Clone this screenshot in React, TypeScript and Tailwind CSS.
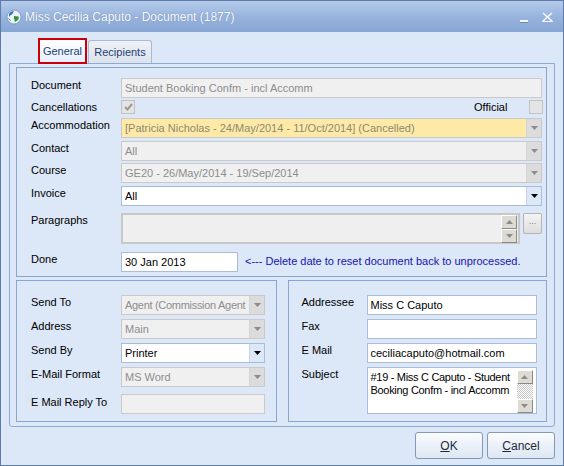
import React from "react";

const Arrow = ({ dark = false, up = false }: { dark?: boolean; up?: boolean }) => (
  <svg width="7" height="4" viewBox="0 0 7 4" aria-hidden>
    <path d={up ? "M0 4h7L3.5 0z" : "M0 0h7L3.5 4z"} fill={dark ? "#000" : "#8c8c8c"} />
  </svg>
);

type FieldProps = {
  value?: string;
  width: string;
  disabled?: boolean;
  combo?: boolean;
  yellow?: boolean;
  tight?: boolean;
};

const Field = ({ value = "", width, disabled = false, combo = false, yellow = false, tight = false }: FieldProps) => {
  const box = disabled
    ? yellow
      ? "border-[#c9c9c9] bg-[#ffe9a6] text-[#8d8a72]"
      : "border-[#cacaca] bg-[#f0f0f0] text-[#8d8d8d]"
    : "border-[#a9bcd8] bg-white text-black";
  return (
    <div className={`flex h-5 shrink-0 border ${box} ${width}`}>
      <div
        className={
          tight
            ? "min-w-0 flex-1 overflow-hidden whitespace-nowrap pl-[3px] leading-[18px] tracking-[-0.3px]"
            : "min-w-0 flex-1 overflow-hidden whitespace-nowrap px-[3px] leading-[18px]"
        }
      >
        {value}
      </div>
      {combo && (
        <div
          className={
            disabled
              ? "flex w-[15px] items-center justify-center border-l border-[#d4d4d4] bg-[#dcdcdc]"
              : "flex w-[15px] items-center justify-center border-l border-[#c5d5ea] bg-[#dde8f6]"
          }
        >
          <Arrow dark={!disabled} />
        </div>
      )}
    </div>
  );
};

const Label = ({ children, w }: { children: React.ReactNode; w: string }) => (
  <div className={`${w} shrink-0 pt-[1px] leading-[13px]`}>{children}</div>
);

const SpinButton = ({ up }: { up?: boolean }) => (
  <div className="flex h-[14px] w-[16px] items-center justify-center border border-t-[#ffffff] border-l-[#ffffff] border-r-[#8a8a8a] border-b-[#8a8a8a] bg-[#dedbd2]">
    <Arrow up={up} />
  </div>
);

const CheckBox = ({ checked }: { checked?: boolean }) => (
  <div className="flex h-[14px] w-[14px] items-center justify-center border border-[#c2c2c2] bg-[#e4e4e4]">
    {checked && (
      <svg width="9" height="8" viewBox="0 0 9 8" aria-hidden>
        <path d="M1 4l2.5 2.5L8 1" stroke="#9a9a9a" strokeWidth="2" fill="none" />
      </svg>
    )}
  </div>
);

const GlobeIcon = () => (
  <svg width="16" height="16" viewBox="0 0 16 16" aria-hidden>
    <circle cx="8" cy="8" r="7" fill="#e9f1fb" stroke="#6d8fb8" strokeWidth="0.8" />
    <path d="M3 5c1-2 3-3 5-3-1 1-1 3-3 4-1 0-1 1-2 2z" fill="#2f6fb4" />
    <path d="M8 7c2 0 3 1 4 0 1 1 1 3 0 4-1 1-2 1-3 2-1-1 0-3-1-3z" fill="#3b8f3a" />
    <path d="M2 9c1 0 2 1 3 3-1 0-2-1-3-3z" fill="#5aa04a" />
  </svg>
);

export default function App() {
  return (
    <div className="flex h-[466px] w-[564px] flex-col overflow-hidden border border-[#5f7ca8] bg-[#dce7f7] font-['Liberation_Sans',Arial,sans-serif] text-[11px] text-black">
      {/* title bar */}
      <div className="flex h-[31px] shrink-0 items-center bg-gradient-to-b from-[#b5cbea] via-[#98b4de] to-[#87a6d3] pl-[5px] pr-[10px]">
        <GlobeIcon />
        <div className="ml-[3px] text-[12px] text-white [text-shadow:0_0_1px_#5575a3]">
          Miss Cecilia Caputo - Document (1877)
        </div>
        <div className="ml-auto flex items-center gap-[14px] text-white">
          <div className="mt-[8px] h-[2px] w-[8px] bg-[#f4f8fd] shadow-[0_1px_0_#6b88b3]" />
          <svg width="11" height="10" viewBox="0 0 11 10" aria-hidden>
            <path d="M1 1l9 8M10 1L1 9" stroke="#f4f8fd" strokeWidth="1.6" />
            <path d="M0 9.5h11" stroke="#f4f8fd" strokeWidth="1" />
          </svg>
        </div>
      </div>

      <div className="flex flex-1 flex-col px-[8px]">
        {/* tabs */}
        <div className="flex h-[31px] shrink-0 items-end pl-[29px]">
          <div className="relative z-10 -mb-[1px] flex h-[26px] w-[49px] items-center justify-center border-2 border-[#c8000a] bg-gradient-to-b from-white to-[#e6eefa] text-[#1c3f78]">
            General
          </div>
          <div className="ml-[1px] flex h-[23px] w-[64px] items-center justify-center rounded-t-[3px] border border-b-0 border-[#a7b9d5] bg-gradient-to-b from-[#eef1f5] to-[#dde3ec] text-[#1c3f78]">
            Recipients
          </div>
        </div>

        {/* tab page */}
        <div className="flex h-[364px] shrink-0 flex-col rounded-b-[3px] border border-[#8faad2] pl-[6px] pr-[7px] pt-[3px]">
          {/* top group */}
          <div className="flex h-[210px] flex-col border border-[#8aa6cf] pl-[14px] pt-[10px]">
            <div className="flex">
              <Label w="w-[90px]">Document</Label>
              <Field width="w-[421px]" disabled value="Student Booking Confm - incl Accomm" />
            </div>
            <div className="mt-[2px] flex h-[16px] items-start">
              <div className="w-[90px] shrink-0 leading-[14px]">Cancellations</div>
              <CheckBox checked />
              <div className="ml-[339px] w-[55px] leading-[14px]">Official</div>
              <CheckBox />
            </div>
            <div className="mt-[2px] flex">
              <Label w="w-[90px]">Accommodation</Label>
              <Field
                width="w-[421px]"
                disabled
                combo
                yellow
                value="[Patricia Nicholas - 24/May/2014 - 11/Oct/2014] (Cancelled)"
              />
            </div>
            <div className="mt-[3px] flex">
              <Label w="w-[90px]">Contact</Label>
              <Field width="w-[421px]" disabled combo value="All" />
            </div>
            <div className="mt-[2px] flex">
              <Label w="w-[90px]">Course</Label>
              <Field width="w-[421px]" disabled combo value="GE20 - 26/May/2014 - 19/Sep/2014" />
            </div>
            <div className="mt-[3px] flex">
              <Label w="w-[90px]">Invoice</Label>
              <Field width="w-[421px]" combo value="All" />
            </div>
            <div className="mt-[7px] flex">
              <Label w="w-[90px]">Paragraphs</Label>
              <div className="flex h-[31px] w-[399px] items-center justify-end border-2 border-[#c8c8c8] bg-[#efefef] pr-[1px]">
                <div className="flex flex-col">
                  <SpinButton up />
                  <SpinButton />
                </div>
              </div>
              <div className="ml-[3px] flex h-[21px] w-[19px] items-center justify-center rounded-[2px] border border-[#b4b4b4] bg-gradient-to-b from-[#f4f4f4] to-[#dddddd] pb-[4px] text-[9px] text-[#7a7a7a]">
                ...
              </div>
            </div>
            <div className="mt-[8px] flex">
              <Label w="w-[90px]">Done</Label>
              <Field width="w-[117px]" value="30 Jan 2013" />
              <div className="ml-[7px] whitespace-nowrap pt-[3px] leading-[13px] text-[#1515b0]">
                &lt;--- Delete date to reset document back to unprocessed.
              </div>
            </div>
          </div>

          {/* bottom groups */}
          <div className="mt-[3px] flex gap-[11px]">
            <div className="flex h-[142px] w-[261px] flex-col gap-[4px] border border-[#8aa6cf] pl-[14px] pt-[14px]">
              <div className="flex">
                <Label w="w-[90px]">Send To</Label>
                <Field width="w-[144px]" disabled combo tight value="Agent (Commission Agent" />
              </div>
              <div className="flex">
                <Label w="w-[90px]">Address</Label>
                <Field width="w-[144px]" disabled combo value="Main" />
              </div>
              <div className="flex">
                <Label w="w-[90px]">Send By</Label>
                <Field width="w-[144px]" combo value="Printer" />
              </div>
              <div className="flex">
                <Label w="w-[90px]">E-Mail Format</Label>
                <Field width="w-[144px]" disabled combo value="MS Word" />
              </div>
              <div className="mt-[3px] flex">
                <div className="w-[90px] shrink-0 pt-[2px] leading-[13px]">E Mail Reply To</div>
                <Field width="w-[144px]" disabled />
              </div>
            </div>

            <div className="flex h-[142px] w-[260px] flex-col gap-[4px] border border-[#8aa6cf] pl-[13px] pt-[14px]">
              <div className="flex">
                <Label w="w-[65px]">Addressee</Label>
                <Field width="w-[170px]" value="Miss C Caputo" />
              </div>
              <div className="flex">
                <Label w="w-[65px]">Fax</Label>
                <Field width="w-[170px]" />
              </div>
              <div className="flex">
                <Label w="w-[65px]">E Mail</Label>
                <Field width="w-[170px]" value="ceciliacaputo@hotmail.com" />
              </div>
              <div className="flex">
                <Label w="w-[65px]">Subject</Label>
                <div className="flex h-[47px] w-[170px] border border-[#a9bcd8] bg-white">
                  <div className="min-w-0 flex-1 overflow-hidden whitespace-nowrap pl-[3px] pt-[3px] leading-[13px] tracking-[-0.3px]">
                    #19 - Miss C Caputo - Student
                    <br />
                    Booking Confm - incl Accomm
                  </div>
                  <div className="mr-[3px] mt-[2px] flex h-[43px] w-[16px] shrink-0 flex-col">
                    <SpinButton up />
                    <div className="flex-1 bg-[repeating-conic-gradient(#c8c8c8_0_25%,#ffffff_0_50%)] bg-[length:2px_2px]" />
                    <SpinButton />
                  </div>
                </div>
              </div>
            </div>
          </div>
        </div>

        {/* buttons */}
        <div className="mt-[5px] flex justify-end gap-[4px]">
          <button className="h-[27px] w-[68px] rounded-[3px] border border-[#8497b4] bg-gradient-to-b from-[#fbfcfe] to-[#dde6f2] text-[12px] text-[#1d2a3d]">
            <span className="underline">O</span>K
          </button>
          <button className="h-[27px] w-[68px] rounded-[3px] border border-[#8497b4] bg-gradient-to-b from-[#fbfcfe] to-[#dde6f2] text-[12px] text-[#1d2a3d]">
            <span className="underline">C</span>ancel
          </button>
        </div>
      </div>
    </div>
  );
}
